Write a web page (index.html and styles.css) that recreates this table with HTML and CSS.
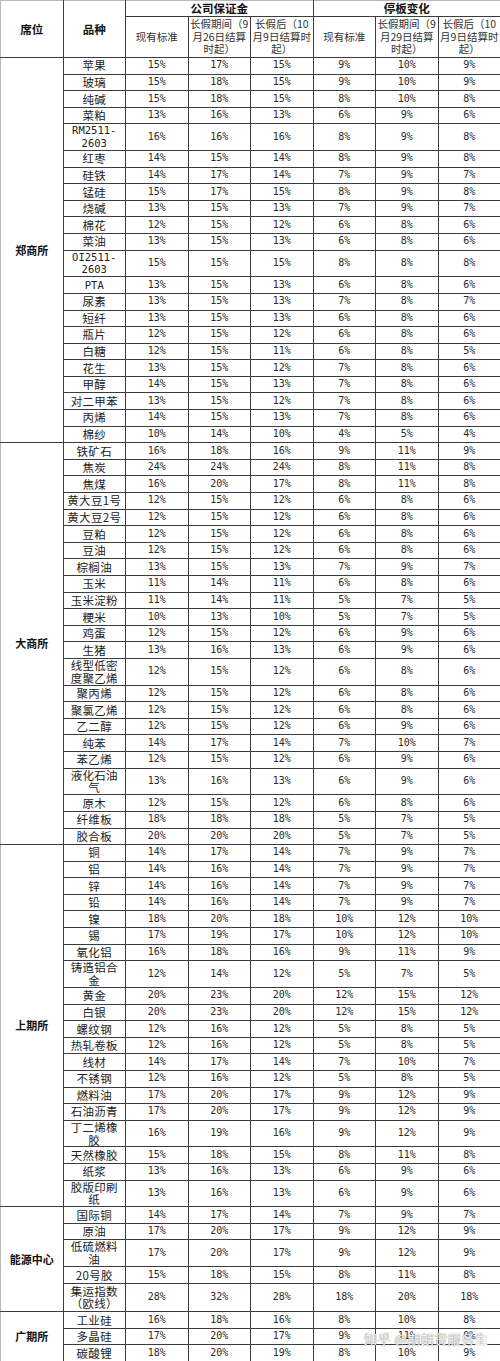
FILE: index.html
```html
<!DOCTYPE html>
<html lang="zh-CN">
<head>
<meta charset="utf-8">
<title>保证金与停板调整</title>
<link rel="stylesheet" href="styles.css">
</head>
<body>
<div class="sheet">
<table>
<colgroup><col><col><col><col><col><col><col><col></colgroup>
<thead>
<tr class="h1">
  <th rowspan="2" class="seat">席位</th>
  <th rowspan="2">品种</th>
  <th colspan="3">公司保证金</th>
  <th colspan="3">停板变化</th>
</tr>
<tr class="h2">
  <th class="sub">现有标准</th>
  <th class="sub">长假期间（9<br>月26日结算<br>时起）</th>
  <th class="sub">长假后（10<br>月9日结算时<br>起）</th>
  <th class="sub">现有标准</th>
  <th class="sub">长假期间（9<br>月29日结算<br>时起）</th>
  <th class="sub">长假后（10<br>月9日结算时<br>起）</th>
</tr>
</thead>
<tbody>
<tr class="s"><td rowspan="22" class="ex">郑商所</td><td class="name">苹果</td><td>15%</td><td>17%</td><td>15%</td><td>9%</td><td>10%</td><td>9%</td></tr>
<tr class="s"><td class="name">玻璃</td><td>15%</td><td>18%</td><td>15%</td><td>9%</td><td>10%</td><td>9%</td></tr>
<tr class="s"><td class="name">纯碱</td><td>15%</td><td>18%</td><td>15%</td><td>8%</td><td>10%</td><td>8%</td></tr>
<tr class="s"><td class="name">菜粕</td><td>13%</td><td>16%</td><td>13%</td><td>6%</td><td>9%</td><td>6%</td></tr>
<tr class="d"><td class="name code">RM2511-<br>2603</td><td>16%</td><td>16%</td><td>16%</td><td>8%</td><td>9%</td><td>8%</td></tr>
<tr class="s"><td class="name">红枣</td><td>14%</td><td>15%</td><td>14%</td><td>8%</td><td>9%</td><td>8%</td></tr>
<tr class="s"><td class="name">硅铁</td><td>14%</td><td>17%</td><td>14%</td><td>7%</td><td>9%</td><td>7%</td></tr>
<tr class="s"><td class="name">锰硅</td><td>15%</td><td>17%</td><td>15%</td><td>8%</td><td>9%</td><td>8%</td></tr>
<tr class="s"><td class="name">烧碱</td><td>13%</td><td>15%</td><td>13%</td><td>7%</td><td>9%</td><td>7%</td></tr>
<tr class="s"><td class="name">棉花</td><td>12%</td><td>15%</td><td>12%</td><td>6%</td><td>8%</td><td>6%</td></tr>
<tr class="s"><td class="name">菜油</td><td>13%</td><td>15%</td><td>13%</td><td>6%</td><td>8%</td><td>6%</td></tr>
<tr class="d"><td class="name code">OI2511-<br>2603</td><td>15%</td><td>15%</td><td>15%</td><td>8%</td><td>8%</td><td>8%</td></tr>
<tr class="s"><td class="name code">PTA</td><td>13%</td><td>15%</td><td>13%</td><td>6%</td><td>8%</td><td>6%</td></tr>
<tr class="s"><td class="name">尿素</td><td>13%</td><td>15%</td><td>13%</td><td>7%</td><td>8%</td><td>7%</td></tr>
<tr class="s"><td class="name">短纤</td><td>13%</td><td>15%</td><td>13%</td><td>6%</td><td>8%</td><td>6%</td></tr>
<tr class="s"><td class="name">瓶片</td><td>12%</td><td>15%</td><td>12%</td><td>6%</td><td>8%</td><td>6%</td></tr>
<tr class="s"><td class="name">白糖</td><td>12%</td><td>15%</td><td>11%</td><td>6%</td><td>8%</td><td>5%</td></tr>
<tr class="s"><td class="name">花生</td><td>13%</td><td>15%</td><td>12%</td><td>7%</td><td>8%</td><td>6%</td></tr>
<tr class="s"><td class="name">甲醇</td><td>14%</td><td>15%</td><td>13%</td><td>7%</td><td>8%</td><td>6%</td></tr>
<tr class="s"><td class="name">对二甲苯</td><td>13%</td><td>15%</td><td>12%</td><td>7%</td><td>8%</td><td>6%</td></tr>
<tr class="s"><td class="name">丙烯</td><td>14%</td><td>15%</td><td>13%</td><td>7%</td><td>8%</td><td>6%</td></tr>
<tr class="s"><td class="name">棉纱</td><td>10%</td><td>14%</td><td>10%</td><td>4%</td><td>5%</td><td>4%</td></tr>

<tr class="s"><td rowspan="23" class="ex">大商所</td><td class="name">铁矿石</td><td>16%</td><td>18%</td><td>16%</td><td>9%</td><td>11%</td><td>9%</td></tr>
<tr class="s"><td class="name">焦炭</td><td>24%</td><td>24%</td><td>24%</td><td>8%</td><td>11%</td><td>8%</td></tr>
<tr class="s"><td class="name">焦煤</td><td>16%</td><td>20%</td><td>17%</td><td>8%</td><td>11%</td><td>8%</td></tr>
<tr class="s"><td class="name">黄大豆1号</td><td>12%</td><td>15%</td><td>12%</td><td>6%</td><td>8%</td><td>6%</td></tr>
<tr class="s"><td class="name">黄大豆2号</td><td>12%</td><td>15%</td><td>12%</td><td>6%</td><td>8%</td><td>6%</td></tr>
<tr class="s"><td class="name">豆粕</td><td>12%</td><td>15%</td><td>12%</td><td>6%</td><td>8%</td><td>6%</td></tr>
<tr class="s"><td class="name">豆油</td><td>12%</td><td>15%</td><td>12%</td><td>6%</td><td>8%</td><td>6%</td></tr>
<tr class="s"><td class="name">棕榈油</td><td>13%</td><td>15%</td><td>13%</td><td>7%</td><td>9%</td><td>7%</td></tr>
<tr class="s"><td class="name">玉米</td><td>11%</td><td>14%</td><td>11%</td><td>6%</td><td>8%</td><td>6%</td></tr>
<tr class="s"><td class="name">玉米淀粉</td><td>11%</td><td>14%</td><td>11%</td><td>5%</td><td>7%</td><td>5%</td></tr>
<tr class="s"><td class="name">粳米</td><td>10%</td><td>13%</td><td>10%</td><td>5%</td><td>7%</td><td>5%</td></tr>
<tr class="s"><td class="name">鸡蛋</td><td>12%</td><td>15%</td><td>12%</td><td>6%</td><td>9%</td><td>6%</td></tr>
<tr class="s"><td class="name">生猪</td><td>13%</td><td>16%</td><td>13%</td><td>6%</td><td>9%</td><td>6%</td></tr>
<tr class="d"><td class="name">线型低密<br>度聚乙烯</td><td>12%</td><td>15%</td><td>12%</td><td>6%</td><td>8%</td><td>6%</td></tr>
<tr class="s"><td class="name">聚丙烯</td><td>12%</td><td>15%</td><td>12%</td><td>6%</td><td>8%</td><td>6%</td></tr>
<tr class="s"><td class="name">聚氯乙烯</td><td>12%</td><td>15%</td><td>12%</td><td>6%</td><td>8%</td><td>6%</td></tr>
<tr class="s"><td class="name">乙二醇</td><td>12%</td><td>15%</td><td>12%</td><td>6%</td><td>9%</td><td>6%</td></tr>
<tr class="s"><td class="name">纯苯</td><td>14%</td><td>17%</td><td>14%</td><td>7%</td><td>10%</td><td>7%</td></tr>
<tr class="s"><td class="name">苯乙烯</td><td>12%</td><td>15%</td><td>12%</td><td>6%</td><td>9%</td><td>6%</td></tr>
<tr class="d"><td class="name">液化石油<br>气</td><td>13%</td><td>16%</td><td>13%</td><td>6%</td><td>9%</td><td>6%</td></tr>
<tr class="s"><td class="name">原木</td><td>12%</td><td>15%</td><td>12%</td><td>6%</td><td>8%</td><td>6%</td></tr>
<tr class="s"><td class="name">纤维板</td><td>18%</td><td>18%</td><td>18%</td><td>5%</td><td>7%</td><td>5%</td></tr>
<tr class="s"><td class="name">胶合板</td><td>20%</td><td>20%</td><td>20%</td><td>5%</td><td>7%</td><td>5%</td></tr>

<tr class="s"><td rowspan="20" class="ex">上期所</td><td class="name">铜</td><td>14%</td><td>17%</td><td>14%</td><td>7%</td><td>9%</td><td>7%</td></tr>
<tr class="s"><td class="name">铝</td><td>14%</td><td>16%</td><td>14%</td><td>7%</td><td>9%</td><td>7%</td></tr>
<tr class="s"><td class="name">锌</td><td>14%</td><td>16%</td><td>14%</td><td>7%</td><td>9%</td><td>7%</td></tr>
<tr class="s"><td class="name">铅</td><td>14%</td><td>16%</td><td>14%</td><td>7%</td><td>9%</td><td>7%</td></tr>
<tr class="s"><td class="name">镍</td><td>18%</td><td>20%</td><td>18%</td><td>10%</td><td>12%</td><td>10%</td></tr>
<tr class="s"><td class="name">锡</td><td>17%</td><td>19%</td><td>17%</td><td>10%</td><td>12%</td><td>10%</td></tr>
<tr class="s"><td class="name">氧化铝</td><td>16%</td><td>18%</td><td>16%</td><td>9%</td><td>11%</td><td>9%</td></tr>
<tr class="d"><td class="name">铸造铝合<br>金</td><td>12%</td><td>14%</td><td>12%</td><td>5%</td><td>7%</td><td>5%</td></tr>
<tr class="s"><td class="name">黄金</td><td>20%</td><td>23%</td><td>20%</td><td>12%</td><td>15%</td><td>12%</td></tr>
<tr class="s"><td class="name">白银</td><td>20%</td><td>23%</td><td>20%</td><td>12%</td><td>15%</td><td>12%</td></tr>
<tr class="s"><td class="name">螺纹钢</td><td>12%</td><td>16%</td><td>12%</td><td>5%</td><td>8%</td><td>5%</td></tr>
<tr class="s"><td class="name">热轧卷板</td><td>12%</td><td>16%</td><td>12%</td><td>5%</td><td>8%</td><td>5%</td></tr>
<tr class="s"><td class="name">线材</td><td>14%</td><td>17%</td><td>14%</td><td>7%</td><td>10%</td><td>7%</td></tr>
<tr class="s"><td class="name">不锈钢</td><td>12%</td><td>16%</td><td>12%</td><td>5%</td><td>8%</td><td>5%</td></tr>
<tr class="s"><td class="name">燃料油</td><td>17%</td><td>20%</td><td>17%</td><td>9%</td><td>12%</td><td>9%</td></tr>
<tr class="s"><td class="name">石油沥青</td><td>17%</td><td>20%</td><td>17%</td><td>9%</td><td>12%</td><td>9%</td></tr>
<tr class="d"><td class="name">丁二烯橡<br>胶</td><td>16%</td><td>19%</td><td>16%</td><td>9%</td><td>12%</td><td>9%</td></tr>
<tr class="s"><td class="name">天然橡胶</td><td>15%</td><td>18%</td><td>15%</td><td>8%</td><td>11%</td><td>8%</td></tr>
<tr class="s"><td class="name">纸浆</td><td>13%</td><td>16%</td><td>13%</td><td>6%</td><td>9%</td><td>6%</td></tr>
<tr class="d"><td class="name">胶版印刷<br>纸</td><td>13%</td><td>16%</td><td>13%</td><td>6%</td><td>9%</td><td>6%</td></tr>

<tr class="s"><td rowspan="5" class="ex">能源中心</td><td class="name">国际铜</td><td>14%</td><td>17%</td><td>14%</td><td>7%</td><td>9%</td><td>7%</td></tr>
<tr class="s"><td class="name">原油</td><td>17%</td><td>20%</td><td>17%</td><td>9%</td><td>12%</td><td>9%</td></tr>
<tr class="d"><td class="name">低硫燃料<br>油</td><td>17%</td><td>20%</td><td>17%</td><td>9%</td><td>12%</td><td>9%</td></tr>
<tr class="s"><td class="name">20号胶</td><td>15%</td><td>18%</td><td>15%</td><td>8%</td><td>11%</td><td>8%</td></tr>
<tr class="d tall"><td class="name">集运指数<br>（欧线）</td><td>28%</td><td>32%</td><td>28%</td><td>18%</td><td>20%</td><td>18%</td></tr>

<tr class="s"><td rowspan="3" class="ex">广期所</td><td class="name">工业硅</td><td>16%</td><td>18%</td><td>16%</td><td>8%</td><td>10%</td><td>8%</td></tr>
<tr class="s"><td class="name">多晶硅</td><td>17%</td><td>20%</td><td>17%</td><td>9%</td><td>11%</td><td>9%</td></tr>
<tr class="s"><td class="name">碳酸锂</td><td>18%</td><td>20%</td><td>19%</td><td>8%</td><td>10%</td><td>9%</td></tr>
</tbody>
</table>
<div class="wm">知乎 @期朗货服务生</div>
</div>
</body>
</html>
```

FILE: styles.css
```css
html, body {
  margin: 0;
  padding: 0;
  background: #fff;
}

.sheet {
  position: relative;
  width: 500px;
}

table {
  width: 500px;
  border-collapse: collapse;
  table-layout: fixed;
  font-family: "Noto Sans CJK SC", "Noto Sans", sans-serif;
  color: #222;
}

col {
  width: 62.5px;
}

th,
td {
  border: 1px solid #3c3c3c;
  padding: 0;
  text-align: center;
  vertical-align: middle;
  line-height: 12.8px;
  overflow: hidden;
}

th {
  font-weight: 700;
  font-size: 11.5px;
  color: #111;
}

th.sub {
  font-weight: 400;
  font-size: 10.5px;
  color: #333;
}

tr.h1 {
  height: 16px;
}

tr.h1 th {
  border-top-color: #b8b8b8;
}

tr.h2 {
  height: 41px;
}

tr.s {
  height: 16.6px;
}

tr.d {
  height: 26.7px;
}

tr.tall {
  height: 28.5px;
}

td {
  font-family: "DejaVu Sans Mono", "Noto Sans CJK SC", monospace;
  font-size: 10px;
  color: #2a2a2a;
}

td.name {
  font-family: "Noto Sans CJK SC", "Noto Sans", sans-serif;
  font-size: 11.5px;
  letter-spacing: 0.3px;
  color: #222;
}

td.code {
  font-family: "DejaVu Sans Mono", "Noto Sans CJK SC", monospace;
  font-size: 10.5px;
  letter-spacing: 0;
}

td.ex {
  font-family: "Noto Sans CJK SC", "Noto Sans", sans-serif;
  font-weight: 700;
  font-size: 11px;
  color: #111;
}

th.seat,
td.ex {
  border-left-color: #b8b8b8;
}

.wm {
  position: absolute;
  left: 364px;
  top: 1331px;
  font-family: "Noto Sans CJK SC", sans-serif;
  font-size: 13px;
  line-height: 16px;
  letter-spacing: 0.5px;
  color: rgba(255, 255, 255, 0.9);
  text-shadow: 0 0 1px #8a8a8a, 0 0 1px #8a8a8a;
  white-space: nowrap;
}
```
